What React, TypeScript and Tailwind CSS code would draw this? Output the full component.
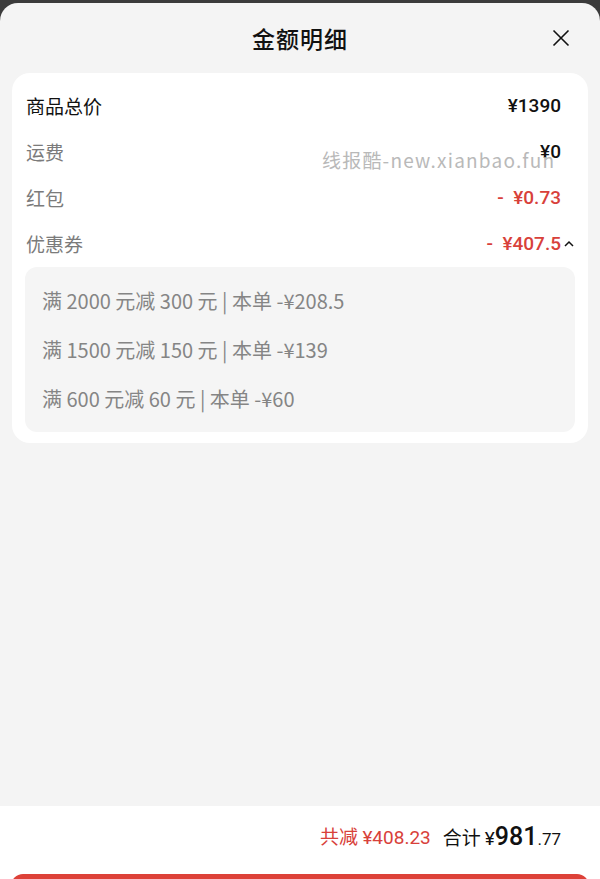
import React from "react";

const cjk = "font-['Noto_Sans_CJK_SC','Noto_Sans',sans-serif]";
const num = "font-['Roboto','Noto_Sans_CJK_SC',sans-serif]";

type Row = {
	label: string;
	value: string;
	strong?: boolean;
	red?: boolean;
	toggle?: boolean;
};

const rows: Row[] = [
	{ label: "商品总价", value: "¥1390", strong: true },
	{ label: "运费", value: "¥0" },
	{ label: "红包", value: "-  ¥0.73", red: true },
	{ label: "优惠券", value: "-  ¥407.5", red: true, toggle: true },
];

// thin spaces around the numbers, as in the app
const coupons = [
	"满 2000 元减 300 元 | 本单 -¥208.5",
	"满 1500 元减 150 元 | 本单 -¥139",
	"满 600 元减 60 元 | 本单 -¥60",
];

export default function App() {
	return (
		<div className={`w-[600px] h-[879px] bg-[#3b3b3b] flex flex-col overflow-hidden ${cjk}`}>
			<div className="mt-[3px] flex-1 flex flex-col bg-[#f4f4f4] rounded-t-[18px] overflow-hidden">
				{/* header */}
				<div className="relative h-[70px] shrink-0 flex items-center justify-center">
					<h1 className="text-[23px] font-medium text-[#111] tracking-[1px]">金额明细</h1>
					<button className="absolute right-[30px] top-[26px] w-[18px] h-[18px]" aria-label="close">
						<svg viewBox="0 0 18 18" width="18" height="18" fill="none" stroke="#111" strokeWidth="1.6">
							<path d="M1.5 1.5 L16.5 16.5 M16.5 1.5 L1.5 16.5" />
						</svg>
					</button>
				</div>

				{/* detail card */}
				<div className="relative shrink-0 mx-3 bg-white rounded-[18px] px-[13px] pt-[10px] pb-[11px]">
					{rows.map((r) => (
						<div key={r.label} className="h-[46px] flex items-center justify-between pl-[1px] pr-[14px]">
							<span className={`text-[19px] ${r.strong ? "text-[#111]" : "text-[#7b7b7b]"}`}>{r.label}</span>
							<span className="flex items-center">
								<span
									className={`${num} whitespace-pre text-[19px] font-medium ${r.red ? "text-[#d8413a]" : "text-[#111]"}`}
								>
									{r.value}
								</span>
								{r.toggle && (
									<svg
										className="-mr-[14px] ml-[2px]"
										viewBox="0 0 12 12"
										width="12"
										height="12"
										fill="none"
										stroke="#111"
										strokeWidth="1.5"
									>
										<path d="M2 8 L6 4 L10 8" />
									</svg>
								)}
							</span>
						</div>
					))}

					<div className="bg-[#f5f5f5] rounded-[12px] py-[9px] px-[17px]">
						{coupons.map((c) => (
							<div key={c} className="h-[49px] flex items-center text-[20px] text-[#858585]">
								{c}
							</div>
						))}
					</div>

					{/* watermark */}
					<span className="absolute left-[310px] top-[73px] text-[19px] tracking-[1.2px] text-[#b9b9b9] pointer-events-none">
						线报酷-new.xianbao.fun
					</span>
				</div>

				<div className="flex-1" />

				{/* footer */}
				<div className="h-[73px] shrink-0 overflow-hidden bg-white">
					<div className="h-[62px] flex items-center justify-end pr-[39px] gap-[12px]">
						<span className="text-[19px] text-[#d8413a]">
							共减 <span className={num}>¥408.23</span>
						</span>
						<span className="flex items-baseline text-[#111]">
							<span className="text-[19px]">合计</span>
							<span className={`${num} text-[19px] ml-[4px]`}>¥</span>
							<span className={`${num} text-[25px] font-medium`}>981</span>
							<span className={`${num} text-[17px]`}>.77</span>
						</span>
					</div>
					<div className="px-[11px] pt-[6px]">
						<div className="h-[40px] rounded-t-[12px] bg-[#dd4138]" />
					</div>
				</div>
			</div>
		</div>
	);
}
